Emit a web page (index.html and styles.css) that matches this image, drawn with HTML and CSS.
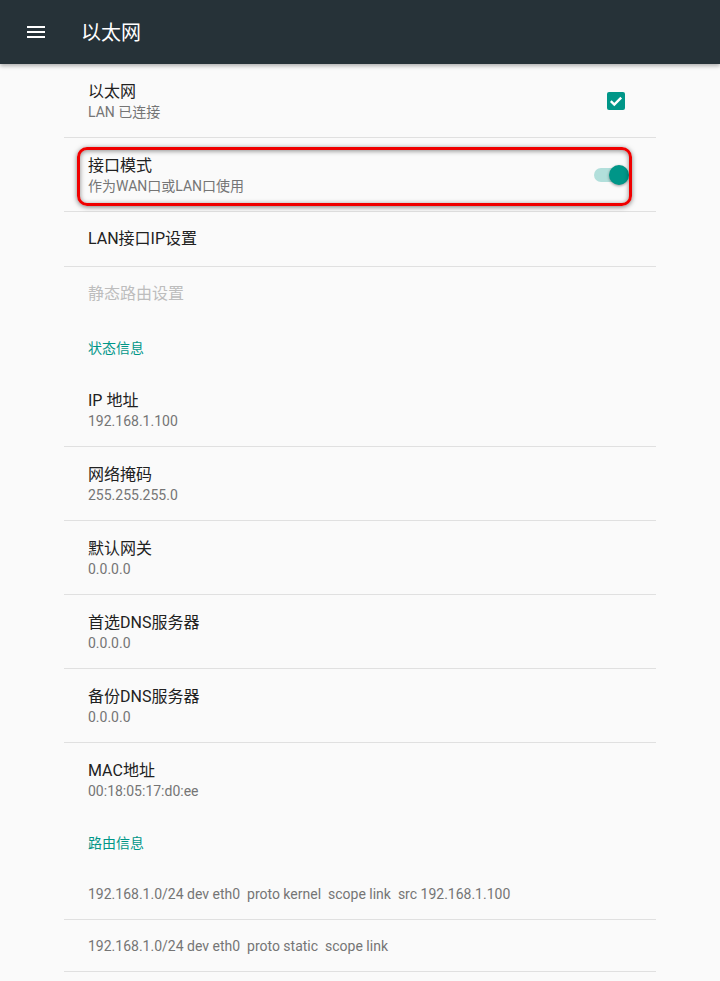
FILE: index.html
```html
<!DOCTYPE html>
<html lang="zh-CN">
<head>
<meta charset="utf-8">
<title>以太网</title>
<link rel="stylesheet" href="styles.css">
</head>
<body>
<header class="appbar">
  <svg class="menu-icon" width="24" height="24" viewBox="0 0 24 24"><rect x="3" y="6" width="18" height="2" fill="#fff"/><rect x="3" y="11" width="18" height="2" fill="#fff"/><rect x="3" y="16" width="18" height="2" fill="#fff"/></svg>
  <h1 class="appbar-title">以太网</h1>
</header>
<main class="prefs">
  <div class="pref two divided">
    <div class="pref-text">
      <div class="pref-title">以太网</div>
      <div class="pref-summary">LAN 已连接</div>
    </div>
    <svg class="checkbox" width="18" height="18" viewBox="0 0 18 18"><rect x="0" y="0" width="18" height="18" rx="2" fill="#009688"/><path d="M3.8 9.2 L7.3 12.6 L14.2 5.6" fill="none" stroke="#fff" stroke-width="2.4"/></svg>
  </div>
  <div class="pref two divided">
    <div class="pref-text">
      <div class="pref-title">接口模式</div>
      <div class="pref-summary">作为WAN口或LAN口使用</div>
    </div>
    <div class="switch"><span class="track"></span><span class="thumb"></span></div>
  </div>
  <div class="pref one divided">
    <div class="pref-title">LAN接口IP设置</div>
  </div>
  <div class="pref one">
    <div class="pref-title disabled">静态路由设置</div>
  </div>
  <div class="category">状态信息</div>
  <div class="pref two divided">
    <div class="pref-text"><div class="pref-title">IP 地址</div><div class="pref-summary">192.168.1.100</div></div>
  </div>
  <div class="pref two divided">
    <div class="pref-text"><div class="pref-title">网络掩码</div><div class="pref-summary">255.255.255.0</div></div>
  </div>
  <div class="pref two divided">
    <div class="pref-text"><div class="pref-title">默认网关</div><div class="pref-summary">0.0.0.0</div></div>
  </div>
  <div class="pref two divided">
    <div class="pref-text"><div class="pref-title">首选DNS服务器</div><div class="pref-summary">0.0.0.0</div></div>
  </div>
  <div class="pref two divided">
    <div class="pref-text"><div class="pref-title">备份DNS服务器</div><div class="pref-summary">0.0.0.0</div></div>
  </div>
  <div class="pref two">
    <div class="pref-text"><div class="pref-title">MAC地址</div><div class="pref-summary">00:18:05:17:d0:ee</div></div>
  </div>
  <div class="category">路由信息</div>
  <div class="route">192.168.1.0/24 dev eth0  proto kernel  scope link  src 192.168.1.100</div>
  <div class="route">192.168.1.0/24 dev eth0  proto static  scope link</div>
</main>
<div class="highlight"></div>
</body>
</html>
```

FILE: styles.css
```css
html, body {
  margin: 0;
  padding: 0;
}
body {
  width: 720px;
  height: 981px;
  overflow: hidden;
  background: #fafafa;
  font-family: Roboto, "Noto Sans CJK SC", sans-serif;
  position: relative;
}
.appbar {
  height: 64px;
  background: #263238;
  display: flex;
  align-items: center;
  box-shadow: 0 2px 4px rgba(0,0,0,0.3);
  position: relative;
  z-index: 1;
}
.menu-icon {
  margin-left: 24px;
  margin-top: 0;
  display: block;
}
.appbar-title {
  margin: 0 0 0 33px;
  font-size: 20px;
  font-weight: 400;
  color: #ffffff;
  line-height: 24px;
  margin-top: 1px;
}
.prefs {
  margin: 0 64px;
}
.pref {
  display: flex;
  align-items: center;
  padding: 0 0 0 24px;
  box-sizing: border-box;
}
.pref.two {
  height: 73px;
}
.pref.one {
  height: 54px;
}
.pref.divided {
  border-bottom: 1px solid #e0e0e0;
}
.pref.two.divided { height: 74px; }
.pref.one.divided { height: 55px; }
.pref-text {
  flex: 1;
}
.pref-title {
  font-size: 16px;
  line-height: 24px;
  color: #212121;
  flex: 1;
}
.pref-title.disabled {
  color: #bdbdbd;
}
.pref-summary {
  font-size: 14px;
  line-height: 20px;
  color: #757575;
  margin-top: -2px;
}
.checkbox {
  display: block;
  margin-right: 31px;
}
.switch {
  position: relative;
  width: 36px;
  height: 20px;
  margin-right: 27px;
}
.track {
  position: absolute;
  left: 1px;
  top: 3px;
  width: 33px;
  height: 14px;
  border-radius: 7px;
  background: #b2dfdb;
}
.thumb {
  position: absolute;
  right: 0;
  top: 0;
  width: 20px;
  height: 20px;
  border-radius: 50%;
  background: #009688;
  box-shadow: 0 1px 3px rgba(0,0,0,0.4);
}
.category {
  height: 52px;
  box-sizing: border-box;
  padding: 17px 0 0 24px;
  font-size: 14px;
  line-height: 20px;
  color: #009688;
}
.route {
  height: 52px;
  box-sizing: border-box;
  padding: 16px 0 0 24px;
  font-size: 14px;
  line-height: 20px;
  color: #757575;
  white-space: pre;
  border-bottom: 1px solid #e0e0e0;
}
.highlight {
  position: absolute;
  left: 77px;
  top: 147px;
  width: 555px;
  height: 59px;
  box-sizing: border-box;
  border: 3px solid #f00000;
  border-radius: 10px;
  box-shadow: 0 1px 5px rgba(0,0,0,0.5), inset 0 1px 5px rgba(0,0,0,0.45);
  pointer-events: none;
}
```
